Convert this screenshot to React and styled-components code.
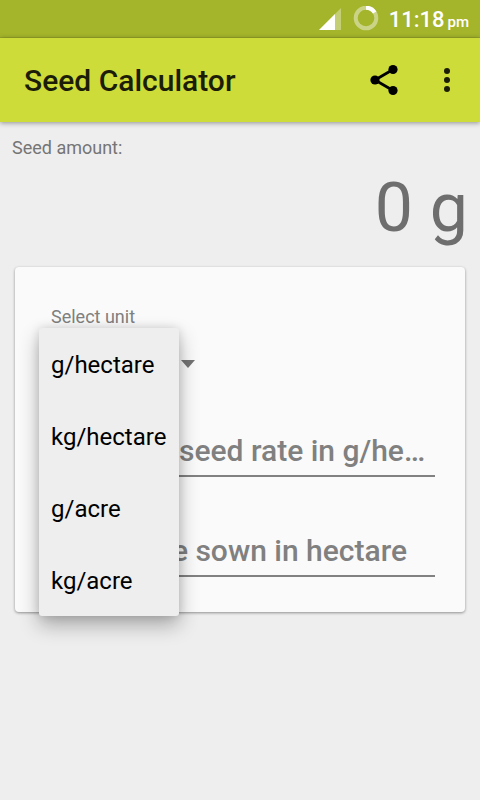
import React, { useState } from 'react';
import styled, { createGlobalStyle } from 'styled-components';

const GlobalStyle = createGlobalStyle`
  * { box-sizing: border-box; }
  body {
    margin: 0;
    background: #eeeeee;
    font-family: Roboto, "Noto Sans", sans-serif;
    color: #757575;
  }
  button, input, select { font: inherit; color: inherit; }
`;

const Screen = styled.div`
  display: flex;
  flex-direction: column;
  min-height: 100vh;
`;

const StatusBar = styled.div`
  display: flex;
  align-items: center;
  justify-content: flex-end;
  height: 38px;
  padding: 0 11px;
  background: #a4b42b;
  border-bottom: 1px solid #98a628;
  color: #ffffff;
`;

const SignalIcon = styled.svg`
  width: 22px;
  height: 22px;
  margin-right: 12px;
`;

const BatteryIcon = styled.svg`
  width: 26px;
  height: 26px;
  margin-right: 10px;
`;

const Clock = styled.time`
  font-size: 22px;
  line-height: 36px;
  font-weight: 500;
  padding-top: 4px;
`;

const Meridiem = styled.span`
  margin-left: 3px;
  font-size: 15px;
`;

const AppBar = styled.header`
  display: flex;
  align-items: center;
  height: 84px;
  padding-left: 24px;
  background: #cddc39;
  box-shadow: 0 1px 5px rgba(0, 0, 0, 0.4);
`;

const Title = styled.h1`
  flex: 1;
  margin: 0;
  padding-top: 2px;
  font-size: 30px;
  line-height: 36px;
  font-weight: 500;
  color: #1b1d07;
`;

const IconButton = styled.button`
  display: flex;
  align-items: center;
  justify-content: center;
  width: ${(p) => p.$width}px;
  height: 72px;
  padding: 0;
  border: 0;
  background: none;
  cursor: pointer;
`;

const Content = styled.main`
  display: flex;
  flex-direction: column;
  padding: 12px 12px 24px;
`;

const AmountLabel = styled.div`
  font-size: 18px;
  line-height: 28px;
`;

const Amount = styled.output`
  font-size: 68px;
  line-height: 80px;
  margin: 6px 0 19px;
  text-align: right;
  color: #6e6e6e;
`;

const Card = styled.section`
  display: flex;
  flex-direction: column;
  margin: 0 3px;
  padding: 39px 30px 35px;
  border-radius: 4px;
  background: #fafafa;
  box-shadow: 0 1px 3px rgba(0, 0, 0, 0.4);
`;

const FieldLabel = styled.label`
  padding-left: 6px;
  font-size: 18px;
  line-height: 22px;
  color: #808080;
`;

const UnitField = styled.div`
  position: relative;
  align-self: flex-start;
  display: flex;
  align-items: center;
  margin: 0 0 0 -6px;
`;

const UnitSelect = styled.select`
  appearance: none;
  width: 156px;
  height: 72px;
  padding: 0 12px;
  border: 0;
  background: none;
  font-size: 24px;
  color: #212121;
  cursor: pointer;
`;

const Arrow = styled.svg`
  width: 14px;
  height: 8px;
  margin-left: -14px;
  pointer-events: none;
`;

const Menu = styled.div`
  position: absolute;
  top: 0;
  left: 0;
  display: flex;
  flex-direction: column;
  width: 140px;
  border-radius: 3px;
  background: #eeeeee;
  box-shadow: 0 9px 20px rgba(0, 0, 0, 0.3), 0 0 10px rgba(0, 0, 0, 0.12);
`;

const MenuItem = styled.button`
  height: 72px;
  padding: 2px 12px 0;
  border: 0;
  background: none;
  font-size: 24px;
  text-align: left;
  color: #000000;
  cursor: pointer;
`;

const NumberInput = styled.input`
  width: 100%;
  height: 54px;
  margin-top: ${(p) => p.$gap}px;
  padding: 2px 6px 0;
  border: 0;
  border-bottom: 2px solid #818181;
  border-radius: 0;
  outline: 0;
  background: none;
  font-size: 30px;
  font-weight: 500;
  text-overflow: ellipsis;
  color: #212121;

  &::placeholder { color: #808080; opacity: 1; }
`;

const units = ['g/hectare', 'kg/hectare', 'g/acre', 'kg/acre'];

export default function App() {
  const [unit, setUnit] = useState(units[0]);
  const [open, setOpen] = useState(true);
  const [rate, setRate] = useState('');
  const [area, setArea] = useState('');
  const [mass, land] = unit.split('/');

  const openMenu = (event) => {
    event.preventDefault();
    setOpen(true);
  };
  const choose = (next) => {
    setUnit(next);
    setOpen(false);
  };

  return (
    <Screen>
      <GlobalStyle />
      <StatusBar>
        <SignalIcon viewBox="0 0 22 22" aria-hidden="true">
          <path d="M22 0V22H0Z" fill="#fff" opacity="0.35" />
          <path d="M16 6V22H0Z" fill="#fff" />
        </SignalIcon>
        <BatteryIcon viewBox="0 0 26 26" fill="none" strokeWidth="4" aria-hidden="true">
          <circle cx="13" cy="12" r="10.3" stroke="#fff" opacity="0.43" />
          <path d="M13 1.7A10.3 10.3 0 0 1 21.7 6.5" stroke="#fff" />
        </BatteryIcon>
        <Clock>
          11:18<Meridiem>pm</Meridiem>
        </Clock>
      </StatusBar>
      <AppBar>
        <Title>Seed Calculator</Title>
        <IconButton $width={60} aria-label="Share">
          <svg width="28" height="32" viewBox="0 0 28 32" aria-hidden="true">
            <path d="M23 5.5 5 16l18 10.5" fill="none" stroke="#000" strokeWidth="2.8" />
            <circle cx="5" cy="16" r="4.6" />
            <circle cx="23" cy="5.5" r="4.6" />
            <circle cx="23" cy="26.5" r="4.6" />
          </svg>
        </IconButton>
        <IconButton $width={66} aria-label="More options">
          <svg width="8" height="26" viewBox="0 0 8 26" fill="#1b1d07" aria-hidden="true">
            <circle cx="4" cy="4" r="3" />
            <circle cx="4" cy="13" r="3" />
            <circle cx="4" cy="22" r="3" />
          </svg>
        </IconButton>
      </AppBar>
      <Content>
        <AmountLabel>Seed amount:</AmountLabel>
        <Amount>{Number(rate) * Number(area)} {mass}</Amount>
        <Card>
          <FieldLabel htmlFor="unit">Select unit</FieldLabel>
          <UnitField>
            <UnitSelect
              id="unit"
              value={unit}
              onMouseDown={openMenu}
              onChange={(e) => choose(e.target.value)}
            >
              {units.map((u) => (
                <option key={u}>{u}</option>
              ))}
            </UnitSelect>
            <Arrow viewBox="0 0 14 8" aria-hidden="true">
              <path d="M0 0H14L7 8Z" fill="#737373" />
            </Arrow>
            {open && (
              <Menu role="listbox" aria-label="Select unit">
                {units.map((u) => (
                  <MenuItem key={u} role="option" aria-selected={u === unit} onClick={() => choose(u)}>
                    {u}
                  </MenuItem>
                ))}
              </Menu>
            )}
          </UnitField>
          <NumberInput
            $gap={23}
            aria-label="Seed rate"
            inputMode="decimal"
            placeholder={`Enter the seed rate in ${unit}`}
            value={rate}
            onChange={(e) => setRate(e.target.value)}
          />
          <NumberInput
            $gap={46}
            aria-label="Area to be sown"
            inputMode="decimal"
            placeholder={`Area to be sown in ${land}`}
            value={area}
            onChange={(e) => setArea(e.target.value)}
          />
        </Card>
      </Content>
    </Screen>
  );
}
